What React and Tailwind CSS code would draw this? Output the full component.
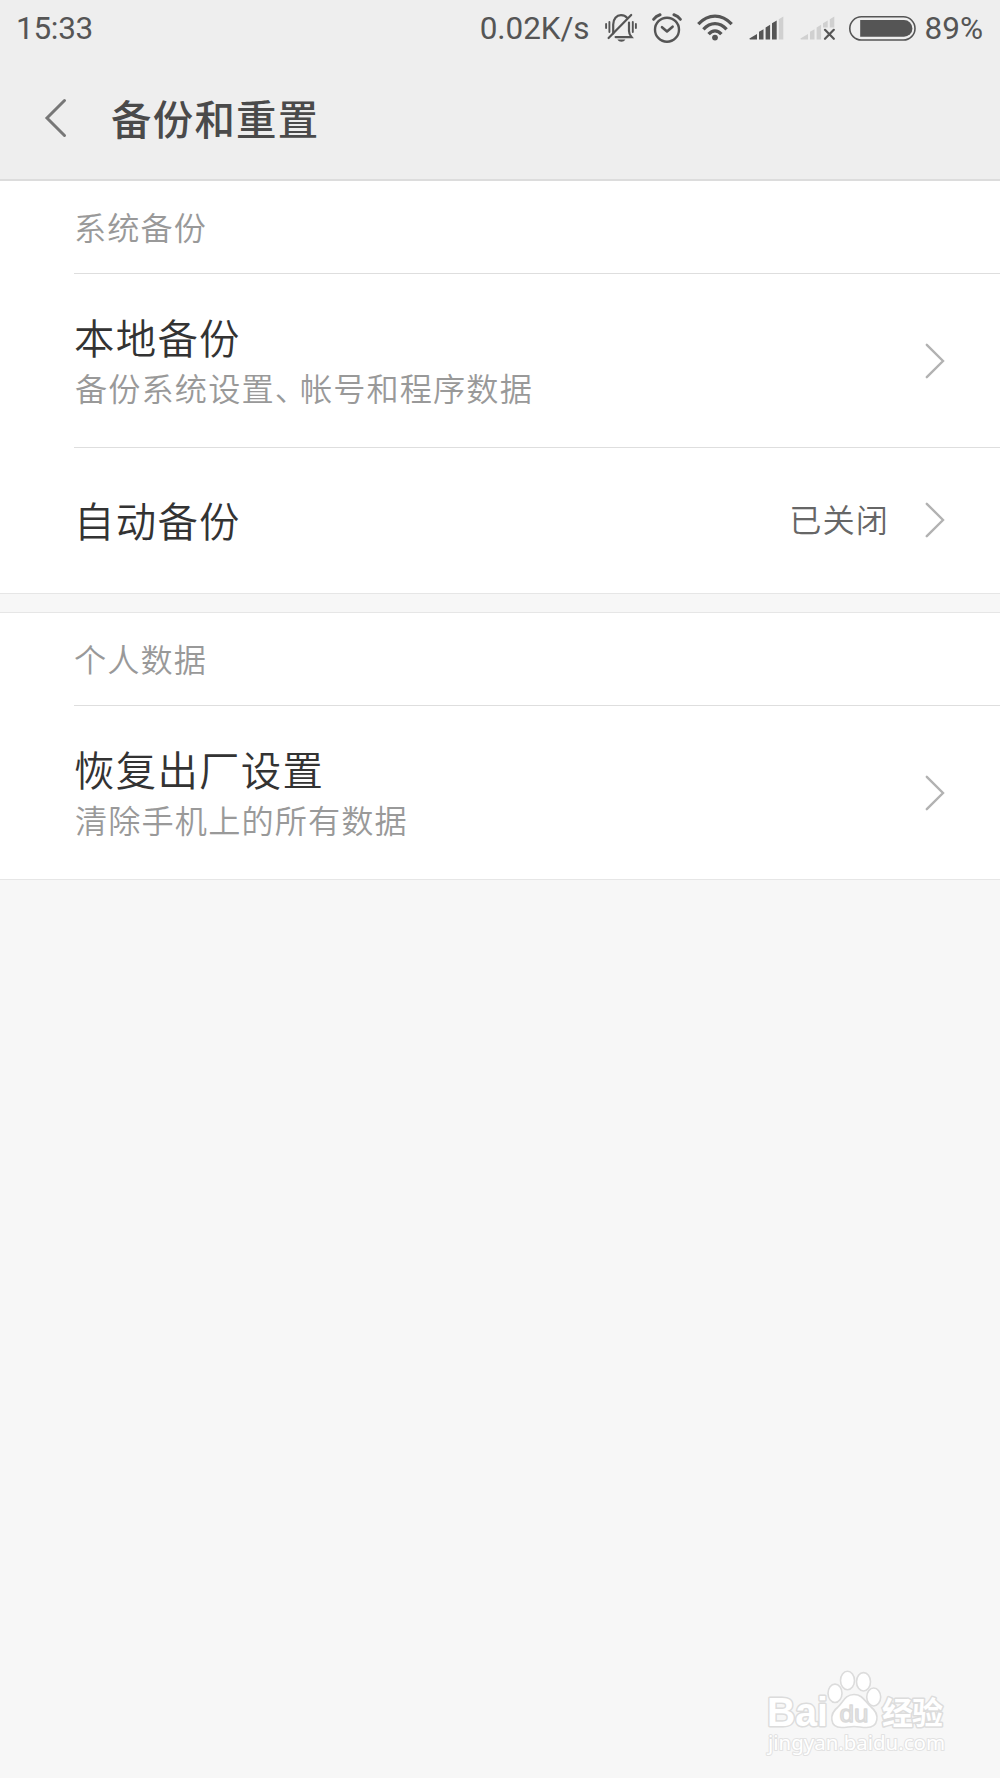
import React from 'react';

const BellOffIcon = () => (
    <svg className="w-8 h-[30px]" viewBox="0 0 32 30" fill="none" stroke="#555" strokeWidth="2.2" strokeLinecap="round">
        <path d="M8.2 20.5V11.5C8.2 6 11.6 2.2 16 2.2c2.6 0 4.7 1 6 2.6" />
        <path d="M24 9.5v8.5c0 3.2 1.2 4.4 2.6 6.1H10.6" />
        <path d="M3.6 25 L26.2 2" />
        <path d="M12.4 26.6h8c-1 1.7-2.3 2.2-4 2.2s-3-.5-4-2.2z" fill="#555" stroke="none" />
        <path d="M1.1 11v4M4.4 9v10M30.9 11v4M27.8 9v10" strokeWidth="1.9" />
    </svg>
);

const AlarmIcon = () => (
    <svg className="w-[30px] h-[30px]" viewBox="0 0 30 30" fill="none" stroke="#555" strokeWidth="2.4" strokeLinecap="round" strokeLinejoin="round">
        <circle cx="15" cy="16.7" r="12" />
        <path d="M10 14.2l5 4.3 5.6-4.8" strokeWidth="2.6" />
        <path d="M1.7 6.3C3.2 4 5.2 2.5 8 1.7M28.3 6.3C26.8 4 24.8 2.5 22 1.7" strokeWidth="3" />
    </svg>
);

const WifiIcon = () => (
    <svg className="w-9 h-[27px]" viewBox="0 0 36 27" fill="none" stroke="#555" strokeWidth="3.3">
        <path d="M1.3 10.2C6 5.2 11.7 2.2 18 2.2s12 3 16.7 8" />
        <path d="M6.4 15.3C9.8 11.6 13.6 9.6 18 9.6s8.2 2 11.6 5.7" />
        <path d="M11.6 20.2c1.9-2.2 4-3.3 6.4-3.3s4.5 1.1 6.4 3.3" />
        <circle cx="18" cy="23.6" r="2.9" fill="#555" stroke="none" />
    </svg>
);

const SignalIcon = () => (
    <svg className="w-[35px] h-6" viewBox="0 0 35 24" fill="#555">
        <path d="M.8 22.2 8 18v5.4H1.2c-.8 0-1-.8-.4-1.2z" />
        <path d="M10 15.8l4.5-2.6v10.2H10zM16.6 11.4l4.5-2.6v14.6h-4.5zM23 7.2l4.7-2.7v18.9H23z" />
        <path d="M29.8 3.2 34.3.5v22.9h-4.5z" fill="#d0d0d0" />
    </svg>
);

const NoSignalIcon = () => (
    <svg className="w-[35px] h-6" viewBox="0 0 35 24" fill="#d0d0d0">
        <path d="M.8 22.2 8 18v5.4H1.2c-.8 0-1-.8-.4-1.2z" />
        <path d="M10 15.8l4.5-2.6v10.2H10zM16.6 11.4l4.5-2.6v14.6h-4.5zM23 7.2l4.7-2.7v7H23zM29.8 3.2 34.3.5v11h-4.5z" />
        <path d="M25 13.8l8.8 9M33.8 13.8l-8.8 9" stroke="#555" strokeWidth="2.2" strokeLinecap="round" />
    </svg>
);

const BatteryIcon = () => (
    <svg className="w-[67px] h-[25px]" viewBox="0 0 67 25" fill="none">
        <rect x=".8" y=".8" width="65.2" height="23.2" rx="11.6" stroke="#555" strokeWidth="1.6" />
        <path d="M11.2 4H55a8.4 8.4 0 0 1 0 16.8H11.2z" fill="#555" />
    </svg>
);

const Chevron = () => (
    <svg className="w-5 h-9 flex-shrink-0" viewBox="0 0 20 36" fill="none" stroke="#b2b2b2" strokeWidth="2.4" strokeLinecap="round">
        <path d="M1.8 1.8 18 18 1.8 34.2" />
    </svg>
);

const StatusBar = () => (
    <div className="flex items-center h-[55px] pl-4 pr-[17px] font-[Roboto,sans-serif] text-[31.5px] leading-none text-[#555]">
        <span className="pt-[3px] tracking-[-0.3px]">15:33</span>
        <div className="flex items-center ml-auto">
            <span className="mr-[15px] pt-[3px] tracking-[-0.1px]">0.02K/s</span>
            <BellOffIcon />
            <div className="ml-[15px]"><AlarmIcon /></div>
            <div className="ml-[15px]"><WifiIcon /></div>
            <div className="ml-4 pt-px"><SignalIcon /></div>
            <div className="ml-4 pt-px"><NoSignalIcon /></div>
            <div className="ml-[14px] pt-px"><BatteryIcon /></div>
            <span className="ml-[9px] pt-[3px]">89%</span>
        </div>
    </div>
);

const SectionTitle = ({ children }) => (
    <h2 className="h-[93px] ml-[74px] pb-0.5 flex items-center border-b border-[#dedede] text-[32.2px] font-[350] tracking-[1.1px] text-[#999]">
        {children}
    </h2>
);

const Row = ({ title, summary, value, last }) => (
    <div className={`ml-[74px] pr-[55px] flex items-center font-[350] ${summary ? 'min-h-[173px]' : 'min-h-[145px] pb-0.5'} ${last ? '' : 'box-content border-b border-[#dedede]'}`}>
        <div className={`flex-1 ${summary ? 'pb-0.5' : ''}`}>
            <div className="text-[40.4px] leading-[54px] tracking-[1.3px] text-[#333]">{title}</div>
            {summary && <div className="pl-px text-[32.2px] leading-[46px] tracking-[1.1px] text-[#999]">{summary}</div>}
        </div>
        {value && <span className="mr-9 -mt-0.5 text-[32.2px] tracking-[1.1px] text-[#666]">{value}</span>}
        <Chevron />
    </div>
);

const Watermark = () => (
    <div className="absolute left-[762px] top-[1668px] w-[190px] h-[92px]">
        <svg className="w-full h-full" viewBox="0 0 190 92" fill="#fff" stroke="#dcdcdc" strokeWidth="1.6" strokeLinejoin="round">
            <g paintOrder="stroke" strokeWidth="3" fontFamily="'Liberation Sans', sans-serif" fontWeight="bold">
                <text x="5" y="58" fontSize="40" textLength="61" lengthAdjust="spacingAndGlyphs">Bai</text>
                <text x="120" y="56" fontSize="31" textLength="61" fontFamily="'Noto Sans CJK SC', sans-serif">经验</text>
            </g>
            <ellipse cx="73" cy="25.3" rx="7" ry="9.2" />
            <ellipse cx="85.5" cy="12.5" rx="7" ry="9.2" />
            <ellipse cx="101.5" cy="13.8" rx="7" ry="9.2" />
            <ellipse cx="111.7" cy="29" rx="7" ry="9" />
            <path d="M92 26.5c-9 0-11 8-16 12.5-9 7-8.5 20.5 3.5 20.5 5 0 8-1 12.5-1s7.5 1 12.5 1c12.5 0 13.5-13.5 4.5-20.5-6-5-8-12.5-17-12.5z" />
            <text x="77.5" y="54" fontSize="24" fontFamily="'Liberation Sans', sans-serif" textLength="29" lengthAdjust="spacingAndGlyphs" fill="#e6e6e6" stroke="#dadada" strokeWidth="1.3">du</text>
            <text x="6" y="82" fontSize="19.5" fontFamily="'Noto Sans', sans-serif" paintOrder="stroke" stroke="#e2e2e2" strokeWidth="2" textLength="177" lengthAdjust="spacingAndGlyphs">jingyan.baidu.com</text>
        </svg>
    </div>
);

export default function App() {
    return (
        <div className="relative w-[1000px] h-[1778px] overflow-hidden bg-[#f7f7f7] font-['Noto_Sans_CJK_SC',sans-serif]">
            <header className="h-[181px] bg-[#eee] border-b-2 border-[#dcdcdc]">
                <StatusBar />
                <div className="flex items-center h-[125px] pl-[44px]">
                    <svg className="w-6 h-10" viewBox="0 0 24 40" fill="none" stroke="#777" strokeWidth="3" strokeLinecap="round">
                        <path d="M20.5 2.5 3 20l17.5 17.5" />
                    </svg>
                    <h1 className="ml-[43px] pt-px text-[40.4px] font-medium tracking-[1.3px] text-[#4a4a4a]">备份和重置</h1>
                </div>
            </header>

            <section className="bg-white border-b border-[#e6e6e6]">
                <SectionTitle>系统备份</SectionTitle>
                <Row
                    title="本地备份"
                    summary={<>备份系统设置<span className="tracking-[-7px]">、</span>帐号和程序数据</>}
                />
                <Row title="自动备份" value="已关闭" last />
            </section>

            <section className="mt-[18px] bg-white border-y border-[#e6e6e6]">
                <SectionTitle>个人数据</SectionTitle>
                <Row title="恢复出厂设置" summary="清除手机上的所有数据" last />
            </section>

            <Watermark />
        </div>
    );
}
